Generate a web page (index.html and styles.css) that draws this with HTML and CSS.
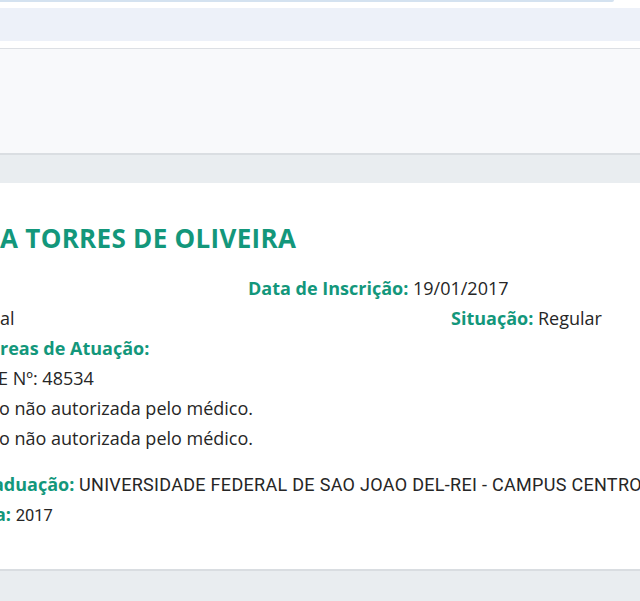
FILE: index.html
```html
<!DOCTYPE html>
<html lang="pt-BR">
<head>
<meta charset="utf-8">
<title>Profissional</title>
<link rel="stylesheet" href="styles.css">
</head>
<body>
<header class="topbar">
  <div class="top-strip"><div class="search-edge"></div></div>
  <div class="nav-band"></div>
  <div class="nav-gap"></div>
</header>
<section class="subheader"></section>
<main class="page">
  <article class="card">
    <h1 class="name">A TORRES DE OLIVEIRA</h1>
    <div class="grid">
      <div class="cell"></div>
      <div class="cell"><span class="lbl">Data de Inscrição:</span> 19/01/2017</div>
      <div class="cell"></div>

      <div class="cell">al</div>
      <div class="cell"></div>
      <div class="cell"><span class="lbl">Situação:</span> Regular</div>
    </div>
    <div class="line"><span class="lbl">reas de Atuação:</span></div>
    <div class="line cut">E Nº: 48534</div>
    <div class="line cut1">o não autorizada pelo médico.</div>
    <div class="line cut1">o não autorizada pelo médico.</div>
    <div class="line spaced cut7"><span class="lbl">aduação:</span> <span class="alt univ">UNIVERSIDADE FEDERAL DE SAO JOAO DEL-REI - CAMPUS CENTRO</span></div>
    <div class="line last cut5"><span class="lbl">a:</span> <span class="alt year">2017</span></div>
  </article>
</main>
</body>
</html>
```
FILE: styles.css
```css
html, body {
  margin: 0;
  padding: 0;
}
body {
  width: 640px;
  height: 601px;
  overflow: hidden;
  background: #e9edf0;
  font-family: "Open Sans", "Noto Sans", sans-serif;
  color: #262626;
}
.topbar {
  background: #ffffff;
}
.top-strip {
  height: 8px;
}
.search-edge {
  width: 614px;
  height: 2px;
  background: #d4e2f0;
  border-bottom-right-radius: 3px;
}
.nav-band {
  height: 33px;
  background: #edf1f9;
}
.nav-gap {
  height: 7px;
  border-bottom: 1px solid #dcdfe4;
}
.subheader {
  height: 104px;
  background: #f8f9fb;
  border-bottom: 2px solid #dadee2;
}
.page {
  padding-top: 28px;
}
.card {
  height: 385px;
  background: #ffffff;
  border-bottom: 2px solid #d9dde1;
  box-sizing: content-box;
  padding-top: 1px;
  white-space: nowrap;
  overflow: hidden;
}
.name {
  margin: 38px 0 19px;
  font-size: 26px;
  line-height: 32px;
  font-weight: 700;
  color: #13977b;
  letter-spacing: 0.3px;
}
.grid {
  display: grid;
  grid-template-columns: 248px 203px 1fr;
  grid-auto-rows: 30px;
  font-size: 18px;
  line-height: 30px;
}
.line {
  font-size: 18px;
  line-height: 30px;
}
.lbl {
  font-weight: 700;
  color: #13977b;
}
.cut {
  text-indent: -2px;
}
.cut1 {
  text-indent: -1px;
}
.cut7 {
  text-indent: -7px;
}
.cut5 {
  text-indent: -5px;
}
.spaced {
  margin-top: 16px;
}
.last {
  margin-top: -1px;
}
.alt {
  font-family: "Roboto", "Liberation Sans", sans-serif;
}
.univ {
  font-size: 18px;
  letter-spacing: 0.3px;
}
.year {
  font-size: 16.5px;
}
```
